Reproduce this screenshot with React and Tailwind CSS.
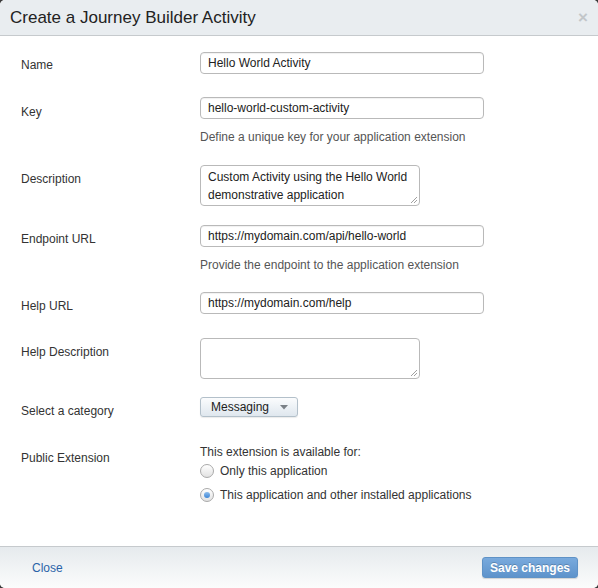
import React from 'react';

const font = { fontFamily: '"Liberation Sans", Arial, sans-serif' };

const Label = ({ children, pt = 'pt-[6px]' }) => (
  <div className={`w-[200px] shrink-0 pl-[21px] text-[12px] leading-4 text-[#333] ${pt}`}>{children}</div>
);

const TextInput = ({ value }) => (
  <div className="w-[284px] h-[22px] rounded-[4px] border border-[#b9b9b9] bg-white px-[7px] text-[12px] leading-5 text-[#222] shadow-[inset_0_1px_1px_rgba(0,0,0,0.06)]">
    {value}
  </div>
);

const TextArea = ({ lines = [] }) => (
  <div className="relative w-[220px] h-[41px] rounded-[4px] border border-[#b9b9b9] bg-white px-[7px] pt-[2px] text-[12px] leading-[18px] text-[#222]">
    {lines.map((l) => (
      <div key={l}>{l}</div>
    ))}
    <svg className="absolute right-[1px] bottom-[1px]" width="8" height="8" viewBox="0 0 8 8">
      <path d="M7 1L1 7M7 4L4 7" stroke="#888" strokeWidth="0.8" />
    </svg>
  </div>
);

const Help = ({ children }) => (
  <div className="mt-[10px] text-[12px] leading-4 text-[#555]">{children}</div>
);

const Radio = ({ checked, label }) => (
  <div className="flex items-center gap-[6px] h-[16px]">
    <div className="w-[14px] h-[14px] rounded-full border border-[#a9a9a9] bg-gradient-to-b from-white to-[#e2e2e2] flex items-center justify-center">
      {checked && <div className="w-[6px] h-[6px] rounded-full bg-gradient-to-b from-[#8cbcec] to-[#3d86d6]" />}
    </div>
    <span className="text-[12px] leading-4 text-[#333]">{label}</span>
  </div>
);

export default function App() {
  return (
    <div className="w-[598px] h-[588px] bg-[#3a3a3a]" style={font}>
      <div className="w-full h-full rounded-[5px] overflow-hidden bg-white flex flex-col">
        {/* header */}
        <div className="h-[36px] shrink-0 flex items-center justify-between bg-[#e9edf0] border-b border-[#c6cacd] pl-[10px] pr-[10px]">
          <h1 className="text-[17px] text-[#222]">Create a Journey Builder Activity</h1>
          <span className="text-[17px] font-bold text-[#c2c6c9] leading-none">×</span>
        </div>

        {/* body */}
        <div className="flex-1 pt-[16px]">
          <div className="flex">
            <Label pt="pt-[5px]">Name</Label>
            <TextInput value="Hello World Activity" />
          </div>

          <div className="flex mt-[23px]">
            <Label pt="pt-[7px]">Key</Label>
            <div>
              <TextInput value="hello-world-custom-activity" />
              <Help>Define a unique key for your application extension</Help>
            </div>
          </div>

          <div className="flex mt-[20px]">
            <Label pt="pt-[6px]">Description</Label>
            <TextArea lines={['Custom Activity using the Hello World', 'demonstrative application']} />
          </div>

          <div className="flex mt-[19px]">
            <Label pt="pt-[6px]">Endpoint URL</Label>
            <div>
              <TextInput value="https://mydomain.com/api/hello-world" />
              <Help>Provide the endpoint to the application extension</Help>
            </div>
          </div>

          <div className="flex mt-[19px]">
            <Label pt="pt-[6px]">Help URL</Label>
            <TextInput value="https://mydomain.com/help" />
          </div>

          <div className="flex mt-[24px]">
            <Label pt="pt-[6px]">Help Description</Label>
            <TextArea />
          </div>

          <div className="flex mt-[18px]">
            <Label pt="pt-[6px]">Select a category</Label>
            <div className="w-[98px] h-[20px] rounded-[3px] border border-[#b3c0ca] bg-gradient-to-b from-[#fbfcfd] to-[#dfe7ee] flex items-center pl-[10px] pr-[9px] justify-between shadow-[0_1px_1px_rgba(0,0,0,0.08)]">
              <span className="text-[12px] leading-4 text-[#222]">Messaging</span>
              <svg width="8" height="5" viewBox="0 0 8 5">
                <path d="M0 0H8L4 4.5Z" fill="#7a8086" />
              </svg>
            </div>
          </div>

          <div className="flex mt-[25px]">
            <Label pt="pt-[6px]">Public Extension</Label>
            <div>
              <div className="text-[12px] leading-4 text-[#333]">This extension is available for:</div>
              <div className="mt-[3px]">
                <Radio label="Only this application" />
              </div>
              <div className="mt-[8px]">
                <Radio checked label="This application and other installed applications" />
              </div>
            </div>
          </div>
        </div>

        {/* footer */}
        <div className="h-[42px] shrink-0 border-t border-[#c6cacd] bg-gradient-to-b from-[#e6eaed] to-[#fbfcfc] flex items-center justify-between pl-[32px] pr-[20px]">
          <span className="text-[12px] text-[#2a63a8]">Close</span>
          <button className="w-[96px] h-[21px] rounded-[3px] border border-[#5f92c6] bg-gradient-to-b from-[#79aadd] to-[#5e93cb] text-[12px] font-bold text-white [text-shadow:0_-1px_0_rgba(0,0,0,0.2)] shadow-[0_1px_1px_rgba(0,0,0,0.15)]">
            Save changes
          </button>
        </div>
      </div>
    </div>
  );
}
